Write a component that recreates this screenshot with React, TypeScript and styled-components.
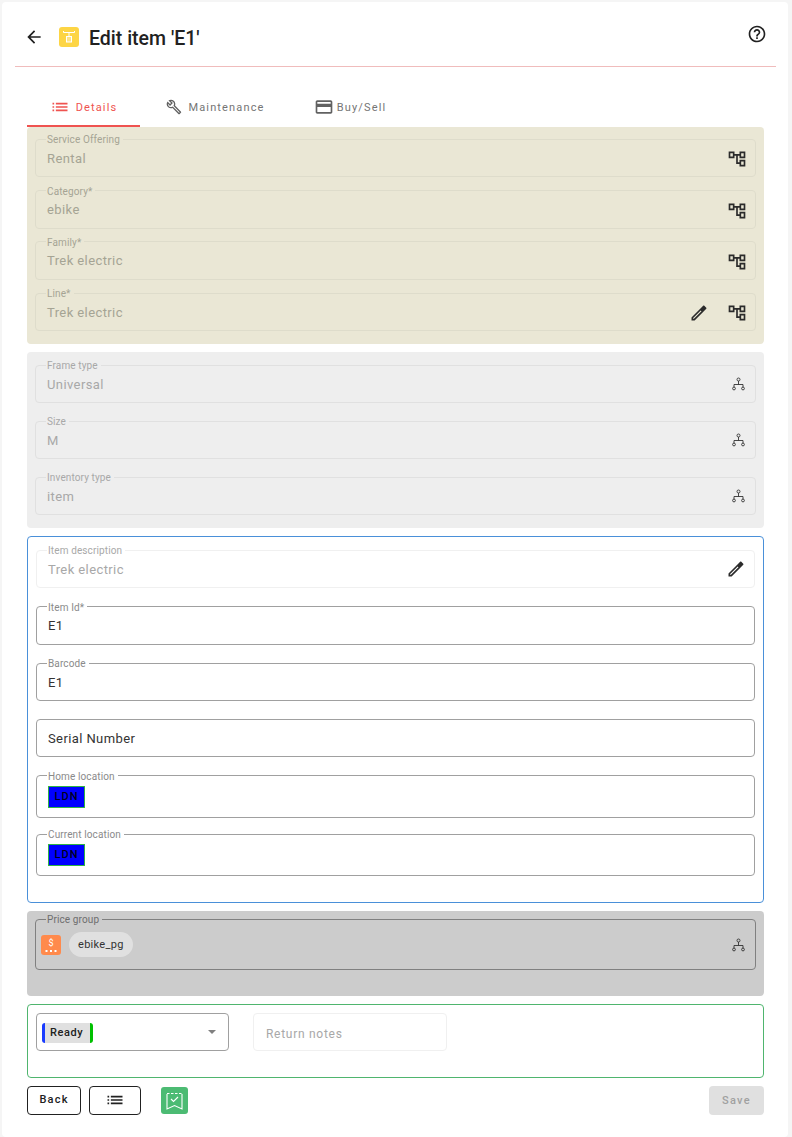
import { ReactNode } from 'react';
import styled, { createGlobalStyle } from 'styled-components';

const GlobalStyle = createGlobalStyle`
  html, body {
    margin: 0;
    padding: 0;
    background: #f5f5f5;
    font-family: Roboto, "Liberation Sans", sans-serif;
  }
  * { box-sizing: border-box; }
`;

// paths of the material icons used on this page
const ICONS = {
  back: 'M20 11H7.83l5.59-5.59L12 4l-8 8 8 8 1.41-1.41L7.83 13H20v-2z',
  help: 'M11 18h2v-2h-2v2zm1-16C6.48 2 2 6.48 2 12s4.48 10 10 10 10-4.48 10-10S17.52 2 12 2zm0 18c-4.41 0-8-3.59-8-8s3.59-8 8-8 8 3.59 8 8-3.59 8-8 8zm0-14c-2.21 0-4 1.79-4 4h2c0-1.1.9-2 2-2s2 .9 2 2c0 2-3 1.75-3 5h2c0-2.25 3-2.5 3-5 0-2.21-1.79-4-4-4z',
  list: 'M3 13h2v-2H3v2zm0 4h2v-2H3v2zm0-8h2V7H3v2zm4 4h14v-2H7v2zm0 4h14v-2H7v2zM7 7v2h14V7H7z',
  build: 'M22.61 18.99l-9.08-9.08c.93-2.34.45-5.1-1.44-7C9.79.61 6.21.4 3.66 2.26L7.5 6.11 6.08 7.52 2.25 3.69C.39 6.23.6 9.82 2.9 12.11c1.86 1.86 4.57 2.35 6.89 1.48l9.11 9.11c.39.39 1.02.39 1.41 0l2.3-2.3c.4-.38.4-1.01 0-1.41zm-3 1.6l-9.46-9.46c-.61.45-1.29.72-2 .82-1.36.2-2.79-.21-3.83-1.25C3.37 9.76 2.93 8.5 3 7.26l3.09 3.09 4.24-4.24-3.09-3.09c1.24-.07 2.49.37 3.44 1.31 1.08 1.08 1.49 2.57 1.24 3.96-.12.71-.42 1.37-.88 1.96l9.45 9.45-.88.88z',
  card: 'M20 4H4c-1.11 0-1.99.89-1.99 2L2 18c0 1.11.89 2 2 2h16c1.11 0 2-.89 2-2V6c0-1.11-.89-2-2-2zm0 14H4v-6h16v6zm0-10H4V6h16v2z',
  tree: 'M22 11V3h-7v3H9V3H2v8h7V8h2v10h4v3h7v-8h-7v3h-2V8h2v3h7zM7 9H4V5h3v4zm10 6h3v4h-3v-4zm0-10h3v4h-3V5z',
  edit: 'M14.06 9.02l.92.92L5.92 19H5v-.92l9.06-9.06M3 17.25V21h3.75L17.81 9.94l-3.75-3.75zM14.06 6.19l2.9-2.9c.39-.39 1.02-.39 1.41 0l2.34 2.34c.39.39.39 1.02 0 1.41l-2.9 2.9z',
};

function Icon({ name, size = 20, color = 'currentColor' }: { name: keyof typeof ICONS; size?: number; color?: string }) {
  return (
    <svg width={size} height={size} viewBox="0 0 24 24" fill={color} style={{ flex: 'none', display: 'block' }}>
      <path d={ICONS[name]} />
    </svg>
  );
}

function OrgIcon() {
  return (
    <svg width="15" height="14" viewBox="0 0 15 14" fill="none" stroke="#333" strokeWidth="0.9" style={{ flex: 'none', display: 'block' }}>
      <circle cx="6.5" cy="2.5" r="1.5" />
      <path d="M6.5 4v3.5M2 10V7.5h9V10" />
      <circle cx="2" cy="11.5" r="1.4" />
      <circle cx="11" cy="11.5" r="1.4" />
    </svg>
  );
}

const Page = styled.div`
  padding: 2px 4px 0 2px;
`;

const Card = styled.main`
  background: #fff;
  border-radius: 4px;
  height: 1135px;
  padding: 0 24px 0 25px;
  overflow: hidden;
`;

const Header = styled.header`
  display: flex;
  align-items: center;
  height: 65px;
  margin: 0 -12px 0 -12px;
  padding: 6px 9px 0 9px;
  border-bottom: 1px solid #f0bcbc;
`;

const BackButton = styled.span`
  display: flex;
  margin-right: 15px;
  color: #212121;
`;

const ModuleBadge = styled.span<{ $bg: string; $size?: number }>`
  display: flex;
  align-items: center;
  justify-content: center;
  flex: none;
  width: ${(p) => p.$size ?? 20}px;
  height: ${(p) => p.$size ?? 20}px;
  border-radius: 3px;
  background: ${(p) => p.$bg};
`;

const Title = styled.h1`
  margin: 3px 0 0 10px;
  font-size: 19.5px;
  font-weight: 500;
  color: #212121;
  flex: 1;
`;

const HelpButton = styled.span`
  display: flex;
  color: #212121;
  margin-top: -7px;
`;

const Tabs = styled.nav`
  display: flex;
  height: 60px;
  padding-top: 22px;
`;

const Tab = styled.div<{ $active?: boolean; $width: number; $gap?: number }>`
  display: flex;
  align-items: center;
  justify-content: center;
  gap: ${(p) => p.$gap ?? 6}px;
  width: ${(p) => p.$width}px;
  font-size: 11px;
  font-weight: 400;
  letter-spacing: 1.15px;
  color: ${(p) => (p.$active ? '#ef5350' : '#757575')};
  border-bottom: 2px solid ${(p) => (p.$active ? '#ef5350' : 'transparent')};
`;

const Panel = styled.section<{ $bg?: string; $border?: string; $padding: string; $gap: number; $height: number }>`
  display: flex;
  flex-direction: column;
  gap: ${(p) => p.$gap}px;
  height: ${(p) => p.$height}px;
  margin-bottom: 8px;
  padding: ${(p) => p.$padding};
  border-radius: 4px;
  background: ${(p) => p.$bg ?? 'transparent'};
  border: ${(p) => (p.$border ? `1px solid ${p.$border}` : 'none')};
`;

// the legend sits on the top border, so the fieldset starts 7px above the line
const Outline = styled.fieldset<{ $line: string; $height: number; $pullNext?: number }>`
  display: block;
  width: 100%;
  height: ${(p) => p.$height + 7}px;
  margin: -7px 0 ${(p) => -(p.$pullNext ?? 0)}px;
  padding: 0 8px 0 11px;
  min-width: 0;
  border: 1px solid ${(p) => p.$line};
  border-radius: 4px;
`;

const Legend = styled.legend<{ $color: string; $empty?: boolean }>`
  height: 14px;
  margin-left: -1px;
  padding: 2px ${(p) => (p.$empty ? 0 : 3)}px 0 ${(p) => (p.$empty ? 0 : 1)}px;
  font-size: 10px;
  line-height: 12px;
  letter-spacing: 0.12px;
  color: ${(p) => p.$color};
`;

const FieldRow = styled.div<{ $height: number }>`
  display: flex;
  align-items: center;
  gap: 18px;
  height: ${(p) => p.$height - 2}px;
  margin-top: -6px;
`;

const Value = styled.span<{ $color: string }>`
  flex: 1;
  font-size: 13px;
  letter-spacing: 0.4px;
  color: ${(p) => p.$color};
`;

// the dark icons of the olive panel sit a pixel under the text's centre
const OliveIcon = styled.span`
  display: flex;
  margin-top: 2px;
`;

const LocationChip = styled.span`
  width: 37px;
  height: 22px;
  background: #0000ff;
  border: 1px solid #2fb344;
  font-size: 11px;
  font-weight: 500;
  line-height: 20px;
  letter-spacing: 1px;
  text-align: center;
  color: #00001a;
`;

const ChipRow = styled.div`
  flex: 1;
  display: flex;
  align-items: center;
  gap: 8px;
  margin-left: -6px;
`;

const GroupChip = styled.span`
  display: flex;
  align-items: center;
  height: 25px;
  padding: 0 9px;
  border-radius: 13px;
  background: #e0e0e0;
  font-size: 11px;
  letter-spacing: 0.3px;
  color: #333;
`;

const StatusRow = styled.div`
  display: flex;
  gap: 24px;
`;

const SelectBox = styled.div`
  display: flex;
  align-items: center;
  justify-content: space-between;
  width: 193px;
  height: 38px;
  padding: 0 12px 0 5px;
  border: 1px solid #a0a0a0;
  border-radius: 4px;
`;

const StatusChip = styled.span`
  height: 20px;
  margin-top: 2px;
  padding: 0 7px 0 5px;
  background: #e0e0e0;
  border-left: 3px solid #1a3cff;
  border-right: 3px solid #00c000;
  border-radius: 3px;
  font-size: 11px;
  font-weight: 500;
  line-height: 20px;
  letter-spacing: 0.6px;
  color: #212121;
`;

const Caret = styled.span`
  width: 0;
  height: 0;
  border-left: 4.5px solid transparent;
  border-right: 4.5px solid transparent;
  border-top: 4.5px solid #808080;
`;

const NotesBox = styled.div`
  display: flex;
  align-items: center;
  width: 194px;
  height: 38px;
  padding: 4px 12px 0;
  border: 1px solid #f0f0f0;
  border-radius: 4px;
  font-size: 12px;
  letter-spacing: 0.72px;
  color: #a8a8a8;
`;

const Actions = styled.footer`
  display: flex;
  align-items: center;
  height: 29px;
`;

const OutlineButton = styled.button<{ $width: number }>`
  display: flex;
  align-items: center;
  justify-content: center;
  width: ${(p) => p.$width}px;
  height: 29px;
  margin-right: 8px;
  padding: 0 0 2px;
  background: #fff;
  border: 1px solid #212121;
  border-radius: 4px;
  font-family: inherit;
  font-size: 11px;
  font-weight: 500;
  letter-spacing: 1.2px;
  color: #212121;
`;

const SaveButton = styled.button`
  margin-left: auto;
  width: 55px;
  height: 29px;
  padding: 0;
  background: #e0e0e0;
  border: 0;
  border-radius: 4px;
  font-family: inherit;
  font-size: 11px;
  font-weight: 500;
  letter-spacing: 1.3px;
  color: #a0a0a0;
`;

const Spacer = styled.span`
  width: 12px;
`;

type FieldProps = {
  label?: string;
  value?: string;
  height?: number;
  line: string;
  labelColor: string;
  valueColor: string;
  children?: ReactNode;
};

function Field({ label, value, height = 38, line, labelColor, valueColor, children }: FieldProps) {
  return (
    <Outline $line={line} $height={height}>
      <Legend $color={labelColor} $empty={!label}>{label}</Legend>
      <FieldRow $height={height}>
        <Value $color={valueColor}>{value}</Value>
        {children}
      </FieldRow>
    </Outline>
  );
}

function OliveField({ label, value, editable }: { label: string; value: string; editable?: boolean }) {
  return (
    <Field line="#dedccb" labelColor="#a5a494" valueColor="#a5a494" label={label} value={value}>
      {editable && <OliveIcon><Icon name="edit" color="#2b2b2b" /></OliveIcon>}
      <OliveIcon><Icon name="tree" color="#2b2b2b" /></OliveIcon>
    </Field>
  );
}

function GreyField({ label, value }: { label: string; value: string }) {
  return (
    <Field line="#e0e0e0" labelColor="#a8a8a8" valueColor="#a8a8a8" label={label} value={value}>
      <OrgIcon />
    </Field>
  );
}

function InputField({ label, value }: { label?: string; value: string }) {
  return <Field line="#a0a0a0" labelColor="#8a8a8a" valueColor="#333" label={label} value={value} />;
}

function LocationField({ label, pullNext }: { label: string; pullNext?: number }) {
  return (
    <Outline $line="#a0a0a0" $height={41.6} $pullNext={pullNext}>
      <Legend $color="#8a8a8a">{label}</Legend>
      <FieldRow $height={41.6}>
        <LocationChip>LDN</LocationChip>
      </FieldRow>
    </Outline>
  );
}

export default function App() {
  return (
    <Page>
      <GlobalStyle />
      <Card>
        <Header>
          <BackButton><Icon name="back" /></BackButton>
          <ModuleBadge $bg="#fdd545">
            <svg width="14" height="14" viewBox="0 0 14 14" fill="none" stroke="#fff" strokeWidth="1">
              <path d="M1.5 1v1.5h11V1M7 2.5v3.5" />
              <rect x="4.5" y="6.5" width="5" height="5.5" fill="#fff" fillOpacity="0.35" />
            </svg>
          </ModuleBadge>
          <Title>Edit item 'E1'</Title>
          <HelpButton><Icon name="help" /></HelpButton>
        </Header>

        <Tabs>
          <Tab $active $width={113}><Icon name="list" size={20} />Details</Tab>
          <Tab $width={151}><Icon name="build" size={16} color="#616161" />Maintenance</Tab>
          <Tab $width={118} $gap={3}><Icon name="card" size={20} color="#616161" />Buy/Sell</Tab>
        </Tabs>

        <Panel $bg="#eae7d5" $padding="12.2px 8px" $gap={13.4} $height={217}>
          <OliveField label="Service Offering" value="Rental" />
          <OliveField label="Category*" value="ebike" />
          <OliveField label="Family*" value="Trek electric" />
          <OliveField label="Line*" value="Trek electric" editable />
        </Panel>

        <Panel $bg="#eeeeee" $padding="13px 8px" $gap={18} $height={176}>
          <GreyField label="Frame type" value="Universal" />
          <GreyField label="Size" value="M" />
          <GreyField label="Inventory type" value="item" />
        </Panel>

        <Panel $border="#4a90d9" $padding="13.1px 8px" $gap={18.46} $height={367}>
          <Field line="#f0f0f0" labelColor="#a8a8a8" valueColor="#a8a8a8" label="Item description" value="Trek electric">
            <Icon name="edit" color="#2b2b2b" />
          </Field>
          <InputField label="Item Id*" value="E1" />
          <InputField label="Barcode" value="E1" />
          <InputField value="Serial Number" />
          <LocationField label="Home location" pullNext={1.6} />
          <LocationField label="Current location" />
        </Panel>

        <Panel $bg="#cccccc" $padding="8px 8px" $gap={0} $height={85}>
          <Outline $line="#808080" $height={51}>
            <Legend $color="#6e6e6e">Price group</Legend>
            <FieldRow $height={51}>
              <ChipRow>
                <ModuleBadge $bg="#ff8a4c">
                  <svg width="14" height="16" viewBox="0 0 14 16" fill="#fff">
                    <text x="7" y="9" fontSize="9" fontFamily="Roboto" textAnchor="middle">$</text>
                    <rect x="1.5" y="13" width="2" height="2" />
                    <rect x="6" y="13" width="2" height="2" />
                    <rect x="10.5" y="13" width="2" height="2" />
                  </svg>
                </ModuleBadge>
                <GroupChip>ebike_pg</GroupChip>
              </ChipRow>
              <OrgIcon />
            </FieldRow>
          </Outline>
        </Panel>

        <Panel $border="#4fb56e" $padding="8px 8px" $gap={0} $height={74}>
          <StatusRow>
            <SelectBox>
              <StatusChip>Ready</StatusChip>
              <Caret />
            </SelectBox>
            <NotesBox>Return notes</NotesBox>
          </StatusRow>
        </Panel>

        <Actions>
          <OutlineButton $width={54}>Back</OutlineButton>
          <OutlineButton $width={52}><Icon name="list" size={20} color="#212121" /></OutlineButton>
          <Spacer />
          <ModuleBadge $bg="#4cbb73" $size={27}>
            <svg width="19" height="20" viewBox="0 0 19 20" fill="none" stroke="#fff" strokeWidth="1.1">
              <path d="M2 3v15l7.5-3.5L17 18V3" />
              <path d="M2 2.5h15" strokeDasharray="2.5 1.5" />
              <path d="M6 8l2.5 2.5L13 6" />
            </svg>
          </ModuleBadge>
          <SaveButton>Save</SaveButton>
        </Actions>
      </Card>
    </Page>
  );
}
